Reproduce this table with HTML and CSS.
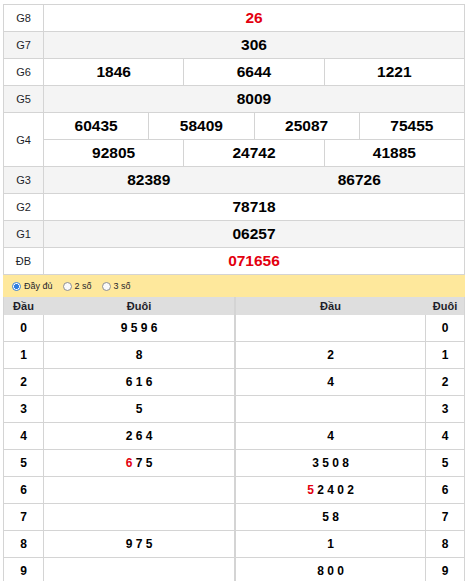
FILE: index.html
```html
<!DOCTYPE html>
<html lang="vi">
<head>
<meta charset="utf-8">
<title>KQXS</title>
<link rel="stylesheet" href="styles.css">
</head>
<body>
<div class="wrap">
  <div class="kq">
    <div class="lbl">G8</div>
    <div class="val"><span class="n red">26</span></div>

    <div class="lbl alt">G7</div>
    <div class="val alt"><span class="n">306</span></div>

    <div class="lbl">G6</div>
    <div class="val"><span class="n">1846</span><span class="n">6644</span><span class="n">1221</span></div>

    <div class="lbl alt">G5</div>
    <div class="val alt"><span class="n">8009</span></div>

    <div class="lbl span2">G4</div>
    <div class="val"><span class="n">60435</span><span class="n">58409</span><span class="n">25087</span><span class="n">75455</span></div>
    <div class="val"><span class="n">92805</span><span class="n">24742</span><span class="n">41885</span></div>

    <div class="lbl alt">G3</div>
    <div class="val alt"><span class="n">82389</span><span class="n">86726</span></div>

    <div class="lbl">G2</div>
    <div class="val"><span class="n">78718</span></div>

    <div class="lbl alt">G1</div>
    <div class="val alt"><span class="n">06257</span></div>

    <div class="lbl">ĐB</div>
    <div class="val"><span class="n red">071656</span></div>
  </div>

  <div class="opts">
    <label class="opt"><span class="radio on"></span>Đầy đủ</label>
    <label class="opt"><span class="radio"></span>2 số</label>
    <label class="opt"><span class="radio"></span>3 số</label>
  </div>

  <div class="loto">
    <div class="lt lt-left">
      <div class="lh"><span>Đầu</span><span>Đuôi</span></div>
      <div class="lb">
        <span class="c key">0</span><span class="c">9 5 9 6</span>
        <span class="c key">1</span><span class="c">8</span>
        <span class="c key">2</span><span class="c">6 1 6</span>
        <span class="c key">3</span><span class="c">5</span>
        <span class="c key">4</span><span class="c">2 6 4</span>
        <span class="c key">5</span><span class="c"><b class="red">6</b> 7 5</span>
        <span class="c key">6</span><span class="c"></span>
        <span class="c key">7</span><span class="c"></span>
        <span class="c key">8</span><span class="c">9 7 5</span>
        <span class="c key">9</span><span class="c"></span>
      </div>
    </div>
    <div class="lt lt-right">
      <div class="lh"><span>Đầu</span><span>Đuôi</span></div>
      <div class="lb">
        <span class="c"></span><span class="c key">0</span>
        <span class="c">2</span><span class="c key">1</span>
        <span class="c">4</span><span class="c key">2</span>
        <span class="c"></span><span class="c key">3</span>
        <span class="c">4</span><span class="c key">4</span>
        <span class="c">3 5 0 8</span><span class="c key">5</span>
        <span class="c"><b class="red">5</b> 2 4 0 2</span><span class="c key">6</span>
        <span class="c">5 8</span><span class="c key">7</span>
        <span class="c">1</span><span class="c key">8</span>
        <span class="c">8 0 0</span><span class="c key">9</span>
      </div>
    </div>
  </div>
</div>
</body>
</html>
```

FILE: styles.css
```css
html, body {
  margin: 0;
  padding: 0;
  background: #fff;
}

body {
  font-family: "Liberation Sans", Arial, sans-serif;
  color: #000;
}

.wrap {
  padding: 4px 0 0 3px;
  width: 462px;
}

/* ---------- result table ---------- */
.kq {
  display: grid;
  grid-template-columns: 39px 1fr;
  grid-auto-rows: 26px;
  gap: 1px;
  background: #d4d4d4;
  border: 1px solid #d4d4d4;
  width: 462px;
  box-sizing: border-box;
}

.lbl {
  background: #fff;
  font-size: 11px;
  color: #1e1e2a;
  display: flex;
  align-items: center;
  justify-content: center;
}

.span2 {
  grid-row: span 2;
}

.val {
  display: grid;
  grid-auto-flow: column;
  grid-auto-columns: 1fr;
  gap: 1px;
  background: #d4d4d4;
}

.n {
  background: #fff;
  display: flex;
  align-items: center;
  justify-content: center;
  font-size: 15.5px;
  font-weight: bold;
  color: #000;
}

.alt,
.alt .n {
  background: #f4f4f4;
}

.red {
  color: #e3000f;
}

/* ---------- options bar ---------- */
.opts {
  height: 22px;
  background: #fee89c;
  display: flex;
  align-items: center;
  padding-left: 9px;
  font-size: 9px;
  color: #1e1e2a;
}

.opt {
  display: flex;
  align-items: center;
  gap: 3px;
  margin-right: 10px;
}

.radio {
  width: 7px;
  height: 7px;
  border-radius: 50%;
  border: 1px solid #8f8f8f;
  background: #fafafa;
}

.radio.on {
  border-color: #3a80d9;
  background: radial-gradient(circle, #2f7de1 0 2.2px, #fff 2.8px);
}

/* ---------- loto tables ---------- */
.loto {
  display: grid;
  grid-template-columns: 232px 230px;
}

.lt {
  border-left: 1px solid #d4d4d4;
  border-right: 1px solid #d4d4d4;
}

.lh {
  display: grid;
  column-gap: 1px;
  height: 18px;
  background: #dedede;
  font-size: 11px;
  font-weight: bold;
  color: #1e1e2a;
}

.lh span {
  display: flex;
  align-items: center;
  justify-content: center;
}

.lb {
  display: grid;
  grid-auto-rows: 26px;
  gap: 1px;
  background: #d4d4d4;
  padding-bottom: 1px;
}

.lt-left .lh,
.lt-left .lb {
  grid-template-columns: 39px 1fr;
}

.lt-right .lh,
.lt-right .lb {
  grid-template-columns: 1fr 38px;
}

.c {
  background: #fff;
  display: flex;
  align-items: center;
  justify-content: center;
  font-size: 12px;
  font-weight: bold;
  color: #000;
  white-space: pre;
}

.c b {
  font-weight: bold;
}
```
